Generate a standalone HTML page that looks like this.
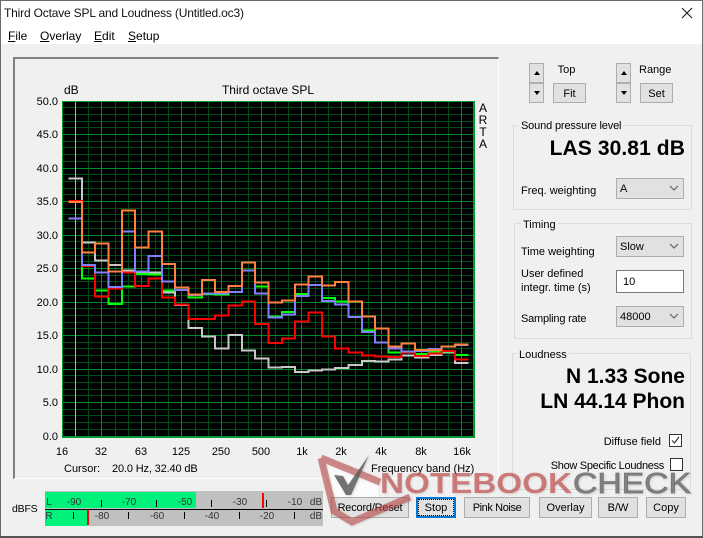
<!DOCTYPE html>
<html><head><meta charset="utf-8"><title>Third Octave SPL and Loudness</title>
<style>
html,body{margin:0;padding:0}
body{width:703px;height:538px;position:relative;overflow:hidden;background:#f0f0f0;font:11px/14px "Liberation Sans",sans-serif;color:#000}
.t{position:absolute;white-space:nowrap;height:14px;line-height:14px;margin-top:1px}
.w{font-size:12px;margin-top:0}
.r{text-align:right}
.c{text-align:center}
.b{position:absolute;box-sizing:border-box;background:#e1e1e1;border:1px solid #adadad;text-align:center;line-height:20px}
.g{position:absolute;box-sizing:border-box;border:1px solid #dcdcdc}
.gl{position:absolute;background:#f0f0f0;padding:0 2px 0 2px;height:14px;line-height:14px;white-space:nowrap;margin-top:1px}
.big{position:absolute;font-weight:bold;font-size:21px;line-height:24px;right:18px;white-space:nowrap;margin-top:1px}
.cb{position:absolute;box-sizing:border-box;width:68px;height:21px;left:616px;background:#e1e1e1;border:1px solid #adadad;padding-left:3px;line-height:20px}
.cb svg{position:absolute;right:4px;top:6px}
.sp{position:absolute;box-sizing:border-box;width:15px;height:20px;background:#e1e1e1;border:1px solid #adadad}
.sp i{position:absolute;left:4px;width:0;height:0;border-left:3px solid transparent;border-right:3px solid transparent}
.m{position:absolute;font-size:10px;line-height:12px;height:12px;color:#333;white-space:nowrap;transform:translateX(-50%)}
.k{position:absolute;width:1px;height:7px;background:#000}
.ck{position:absolute;box-sizing:border-box;width:13px;height:13px;background:#fff;border:1px solid #333}
</style></head><body>
<div style="position:absolute;left:0;top:0;width:703px;height:44px;background:#fff"></div>
<div style="position:absolute;left:0;top:0;width:703px;height:1px;background:#6a6a6a"></div>
<div style="position:absolute;left:0;top:0;width:1px;height:538px;background:#6a6a6a"></div>
<div style="position:absolute;left:702px;top:0;width:1px;height:538px;background:#6a6a6a"></div>
<div style="position:absolute;left:0;top:536px;width:703px;height:2px;background:#555"></div>

<div class="t w" style="left:4px;top:6px;letter-spacing:-.18px;color:#111">Third Octave SPL and Loudness (Untitled.oc3)</div>
<svg style="position:absolute;left:680px;top:6px" width="14" height="14"><path d="M2 2L12 12M12 2L2 12" stroke="#111" stroke-width="1" fill="none"/></svg>
<div class="t w" style="left:8px;top:29px"><u>F</u>ile</div>
<div class="t w" style="left:40px;top:29px"><u>O</u>verlay</div>
<div class="t w" style="left:94px;top:29px"><u>E</u>dit</div>
<div class="t w" style="left:128px;top:29px"><u>S</u>etup</div>

<!-- plot panel -->
<div style="position:absolute;left:13px;top:57px;width:486px;height:422px;box-sizing:border-box;border-left:2px solid #808080;border-top:2px solid #808080;border-right:1px solid #fff;border-bottom:1px solid #fff"></div>

<div class="t w" style="left:64px;top:83px">dB</div>
<div class="t c w" style="left:200px;width:136px;top:83px">Third octave SPL</div>
<div class="t r" style="left:20px;width:38px;top:94px">50.0</div>
<div class="t r" style="left:20px;width:38px;top:127px">45.0</div>
<div class="t r" style="left:20px;width:38px;top:161px">40.0</div>
<div class="t r" style="left:20px;width:38px;top:194px">35.0</div>
<div class="t r" style="left:20px;width:38px;top:228px">30.0</div>
<div class="t r" style="left:20px;width:38px;top:261px">25.0</div>
<div class="t r" style="left:20px;width:38px;top:295px">20.0</div>
<div class="t r" style="left:20px;width:38px;top:328px">15.0</div>
<div class="t r" style="left:20px;width:38px;top:362px">10.0</div>
<div class="t r" style="left:20px;width:38px;top:395px">5.0</div>
<div class="t r" style="left:20px;width:38px;top:429px">0.0</div>

<svg style="position:absolute;left:0;top:0" width="703" height="538" shape-rendering="crispEdges">
<rect x="62" y="101" width="412" height="336" fill="#000"/>
<path fill="none" stroke="#004c18" stroke-width="1" d="M62 107.5h412M62 114.5h412M62 121.5h412M62 127.5h412M62 141.5h412M62 147.5h412M62 154.5h412M62 161.5h412M62 174.5h412M62 181.5h412M62 188.5h412M62 194.5h412M62 208.5h412M62 214.5h412M62 221.5h412M62 228.5h412M62 241.5h412M62 248.5h412M62 255.5h412M62 261.5h412M62 275.5h412M62 281.5h412M62 288.5h412M62 295.5h412M62 308.5h412M62 315.5h412M62 322.5h412M62 328.5h412M62 342.5h412M62 348.5h412M62 355.5h412M62 362.5h412M62 375.5h412M62 382.5h412M62 389.5h412M62 395.5h412M62 409.5h412M62 415.5h412M62 422.5h412M62 429.5h412M88.5 101v335M115.5 101v335M128.5 101v335M155.5 101v335M168.5 101v335M195.5 101v335M208.5 101v335M235.5 101v335M248.5 101v335M275.5 101v335M288.5 101v335M315.5 101v335M328.5 101v335M355.5 101v335M368.5 101v335M395.5 101v335M408.5 101v335M435.5 101v335M448.5 101v335"/>
<path fill="none" stroke="#008a28" stroke-width="1" d="M62 134.5h412M62 168.5h412M62 201.5h412M62 235.5h412M62 268.5h412M62 302.5h412M62 335.5h412M62 369.5h412M62 402.5h412M101.5 101v335M141.5 101v335M181.5 101v335M221.5 101v335M261.5 101v335M301.5 101v335M341.5 101v335M381.5 101v335M421.5 101v335M461.5 101v335"/>
<path fill="none" stroke="#c8c800" stroke-width="1" d="M75.5 101v335"/>
<rect x="62.5" y="101.5" width="411" height="335" fill="none" stroke="#009a33" stroke-width="1"/>
<path fill="none" stroke="#009a33" stroke-width="1" d="M474.5 101v336M62 437.5h413"/>
<!-- gray -->
<path fill="none" stroke="#c8c8c8" stroke-width="2" d="M68.5 178.7h13.33V242.7h13.33V260.7h13.33V265h13.33V270.7h13.33V272h13.33V272.7h13.33V292.7h13.33V305h13.33V328h13.33V336.7h13.33V348.7h13.33V335h13.33V350.7h13.33V358.3h13.33V367.7h13.33V367h13.33V372h13.33V370.7h13.33V369.7h13.33V368h13.33V365h13.33V361h13.33V361.7h13.33V359.7h13.33V355.7h13.33V357.7h13.33V355h13.33V352.7h13.33V363h13.33"/>
<!-- green -->
<path fill="none" stroke="#00ff00" stroke-width="2" d="M68.5 201h13.33V278.7h13.33V290.7h13.33V304h13.33V286.7h13.33V274h13.33V274.7h13.33V290.7h13.33V290h13.33V297.3h13.33V294h13.33V294.7h13.33V292h13.33V270.7h13.33V286.7h13.33V316.3h13.33V312h13.33V294h13.33V285h13.33V298h13.33V301.3h13.33V317h13.33V330.7h13.33V342.7h13.33V352.7h13.33V351.7h13.33V354h13.33V351.7h13.33V351.3h13.33V355h13.33"/>
<!-- red -->
<path fill="none" stroke="#ff0000" stroke-width="2" d="M68.5 201h13.33V266h13.33V296.7h13.33V288.3h13.33V272.7h13.33V286h13.33V278.3h13.33V297.3h13.33V304.7h13.33V319h13.33V319h13.33V315.7h13.33V305.7h13.33V301.7h13.33V324h13.33V343h13.33V338.7h13.33V321.7h13.33V312.7h13.33V336.7h13.33V348.7h13.33V352.7h13.33V355.7h13.33V356.7h13.33V357h13.33V352.3h13.33V356h13.33V353.3h13.33V351h13.33V359.7h13.33"/>
<!-- blue -->
<path fill="none" stroke="#8080ff" stroke-width="2" d="M68.5 218.7h13.33V265h13.33V272.7h13.33V287h13.33V231.7h13.33V271.7h13.33V256h13.33V281.7h13.33V290h13.33V295h13.33V293.7h13.33V293.7h13.33V292h13.33V270.7h13.33V293.7h13.33V317.7h13.33V314.7h13.33V296h13.33V285h13.33V301h13.33V304.7h13.33V317h13.33V332h13.33V342.7h13.33V348.7h13.33V351.7h13.33V351h13.33V349h13.33V346.3h13.33V345h13.33"/>
<!-- orange -->
<path fill="none" stroke="#ff8040" stroke-width="2" d="M68.5 202h13.33V252.7h13.33V243.7h13.33V271.7h13.33V210.7h13.33V247.7h13.33V231.7h13.33V264h13.33V287.7h13.33V294.7h13.33V280h13.33V292h13.33V286h13.33V262.7h13.33V282.7h13.33V302.7h13.33V300.7h13.33V284.7h13.33V276.7h13.33V285.7h13.33V282h13.33V301.7h13.33V316.7h13.33V328.7h13.33V346.7h13.33V343.7h13.33V350h13.33V350h13.33V346.7h13.33V344.7h13.33"/>
</svg>

<div class="t c w" style="left:474px;width:18px;top:101px">A</div>
<div class="t c w" style="left:474px;width:18px;top:113px">R</div>
<div class="t c w" style="left:474px;width:18px;top:125px">T</div>
<div class="t c w" style="left:474px;width:18px;top:137px">A</div>

<div class="t c" style="left:42px;width:40px;top:444px">16</div>
<div class="t c" style="left:81px;width:40px;top:444px">32</div>
<div class="t c" style="left:121px;width:40px;top:444px">63</div>
<div class="t c" style="left:161px;width:40px;top:444px">125</div>
<div class="t c" style="left:201px;width:40px;top:444px">250</div>
<div class="t c" style="left:241px;width:40px;top:444px">500</div>
<div class="t c" style="left:282px;width:40px;top:444px">1k</div>
<div class="t c" style="left:321px;width:40px;top:444px">2k</div>
<div class="t c" style="left:361px;width:40px;top:444px">4k</div>
<div class="t c" style="left:401px;width:40px;top:444px">8k</div>
<div class="t c" style="left:442px;width:40px;top:444px">16k</div>
<div class="t" style="left:64px;top:461px">Cursor:</div>
<div class="t" style="left:112px;top:461px;letter-spacing:-.15px">20.0 Hz, 32.40 dB</div>
<div class="t" style="left:371px;top:461px">Frequency band (Hz)</div>

<!-- top right controls -->
<div class="sp" style="left:529px;top:63px"><i style="top:7px;border-bottom:4px solid #000"></i></div>
<div class="sp" style="left:529px;top:83px"><i style="top:7px;border-top:4px solid #000"></i></div>
<div class="t c" style="left:548px;width:37px;top:62px">Top</div>
<div class="b" style="left:553px;top:83px;width:33px;height:20px">Fit</div>
<div class="sp" style="left:616px;top:63px"><i style="top:7px;border-bottom:4px solid #000"></i></div>
<div class="sp" style="left:616px;top:83px"><i style="top:7px;border-top:4px solid #000"></i></div>
<div class="t" style="left:639px;top:62px">Range</div>
<div class="b" style="left:640px;top:83px;width:33px;height:20px">Set</div>

<!-- SPL -->
<div class="g" style="left:513px;top:125px;width:179px;height:85px"></div>
<div class="gl" style="left:519px;top:118px;letter-spacing:-.15px">Sound pressure level</div>
<div class="big" style="top:136px;letter-spacing:.1px">LAS 30.81 dB</div>
<div class="t" style="left:521px;top:183px">Freq. weighting</div>
<div class="cb" style="top:178px">A<svg width="10" height="6"><path d="M1 1L5 5L9 1" stroke="#555" fill="none"/></svg></div>

<!-- Timing -->
<div class="g" style="left:514px;top:223px;width:178px;height:116px"></div>
<div class="gl" style="left:521px;top:217px">Timing</div>
<div class="t" style="left:521px;top:244px">Time weighting</div>
<div class="cb" style="top:236px">Slow<svg width="10" height="6"><path d="M1 1L5 5L9 1" stroke="#555" fill="none"/></svg></div>
<div class="t" style="left:521px;top:266px">User defined</div>
<div class="t" style="left:521px;top:280px">integr. time (s)</div>
<div style="position:absolute;box-sizing:border-box;left:616px;top:270px;width:68px;height:23px;background:#fff;border:1px solid #7a7a7a;padding-left:6px;line-height:22px">10</div>
<div class="t" style="left:521px;top:311px;letter-spacing:-.2px">Sampling rate</div>
<div class="cb" style="top:306px">48000<svg width="10" height="6"><path d="M1 1L5 5L9 1" stroke="#555" fill="none"/></svg></div>

<!-- Loudness -->
<div class="g" style="left:512px;top:353px;width:179px;height:137px"></div>
<div class="gl" style="left:517px;top:347px">Loudness</div>
<div class="big" style="top:364px">N 1.33 Sone</div>
<div class="big" style="top:389px">LN 44.14 Phon</div>
<div class="t r" style="right:42px;top:434px">Diffuse field</div>
<div class="ck" style="left:669px;top:434px"><svg width="11" height="11" style="display:block"><path d="M2 5.5L4.5 8L9 2" stroke="#333" stroke-width="1.2" fill="none"/></svg></div>
<div class="t r" style="right:39px;top:458px;letter-spacing:-.3px">Show Specific Loudness</div>
<div class="ck" style="left:670px;top:458px"></div>

<!-- meter -->
<div class="t" style="left:12px;top:501px;font-size:10.5px;letter-spacing:-.2px">dBFS</div>
<div style="position:absolute;left:45px;top:491px;width:278px;height:35px;background:#c0c0c0"></div>
<div style="position:absolute;left:45px;top:492px;width:151px;height:16px;background:#00f27a"></div>
<div style="position:absolute;left:45px;top:510px;width:42px;height:16px;background:#00f27a"></div>
<div style="position:absolute;left:45px;top:509px;width:278px;height:1px;background:#000"></div>
<div style="position:absolute;left:262px;top:493px;width:2px;height:15px;background:#f00"></div>
<div style="position:absolute;left:87px;top:510px;width:2px;height:15px;background:#f00"></div>
<div class="k" style="left:101px;top:500px"></div><div class="k" style="left:156px;top:500px"></div><div class="k" style="left:211px;top:500px"></div><div class="k" style="left:266px;top:500px"></div>
<div class="k" style="left:73px;top:512px"></div><div class="k" style="left:128px;top:512px"></div><div class="k" style="left:184px;top:512px"></div><div class="k" style="left:239px;top:512px"></div><div class="k" style="left:294px;top:512px"></div>
<div class="m" style="left:49px;top:497px">L</div>
<div class="m" style="left:49px;top:511px">R</div>
<div class="m" style="left:74px;top:497px">-90</div>
<div class="m" style="left:129px;top:497px">-70</div>
<div class="m" style="left:185px;top:497px">-50</div>
<div class="m" style="left:240px;top:497px">-30</div>
<div class="m" style="left:295px;top:497px">-10</div>
<div class="m" style="left:316px;top:497px">dB</div>
<div class="m" style="left:102px;top:511px">-80</div>
<div class="m" style="left:157px;top:511px">-60</div>
<div class="m" style="left:212px;top:511px">-40</div>
<div class="m" style="left:267px;top:511px">-20</div>
<div class="m" style="left:316px;top:511px">dB</div>

<!-- watermark backing, under the buttons -->
<svg style="position:absolute;left:0;top:0" width="703" height="538">
<path d="M323 459L378 481L378 500L351 520L337 511Z" fill="rgba(255,255,255,.7)"/>
</svg>

<!-- buttons -->
<div class="b" style="left:331px;top:497px;width:78px;height:21px;letter-spacing:-.2px">Record/Reset</div>
<div class="b" style="left:416px;top:497px;width:40px;height:21px;border:2px solid #0078d7;line-height:19px"><span style="position:absolute;left:0;top:0;right:0;bottom:0;border:1px dotted #000;line-height:17px">Stop</span></div>
<div class="b" style="left:464px;top:497px;width:66px;height:21px;letter-spacing:-.4px">Pink Noise</div>
<div class="b" style="left:539px;top:497px;width:53px;height:21px">Overlay</div>
<div class="b" style="left:598px;top:497px;width:40px;height:21px">B/W</div>
<div class="b" style="left:646px;top:497px;width:40px;height:21px">Copy</div>

<!-- watermark -->
<svg style="position:absolute;left:0;top:0;filter:drop-shadow(1px 1px 1px rgba(0,0,0,.18))" width="703" height="538">
<path d="M321 458L380 482M321 458L334 511L352 522L410 497" fill="none" stroke="rgba(190,75,75,.6)" stroke-width="7"/>
<path d="M334 475L343 476L348 485L369 455L351 495L346 495Z" fill="rgba(95,95,95,.85)"/>
<text x="380" y="493" font-family="Liberation Sans" font-weight="bold" font-size="29" textLength="192" lengthAdjust="spacingAndGlyphs" fill="rgba(190,60,60,.62)">NOTEBOOK</text>
<text x="573" y="493" font-family="Liberation Sans" font-size="29" textLength="118" lengthAdjust="spacingAndGlyphs" stroke="rgba(95,95,95,.7)" stroke-width=".8" fill="rgba(95,95,95,.7)">CHECK</text>
</svg>
</body></html>
